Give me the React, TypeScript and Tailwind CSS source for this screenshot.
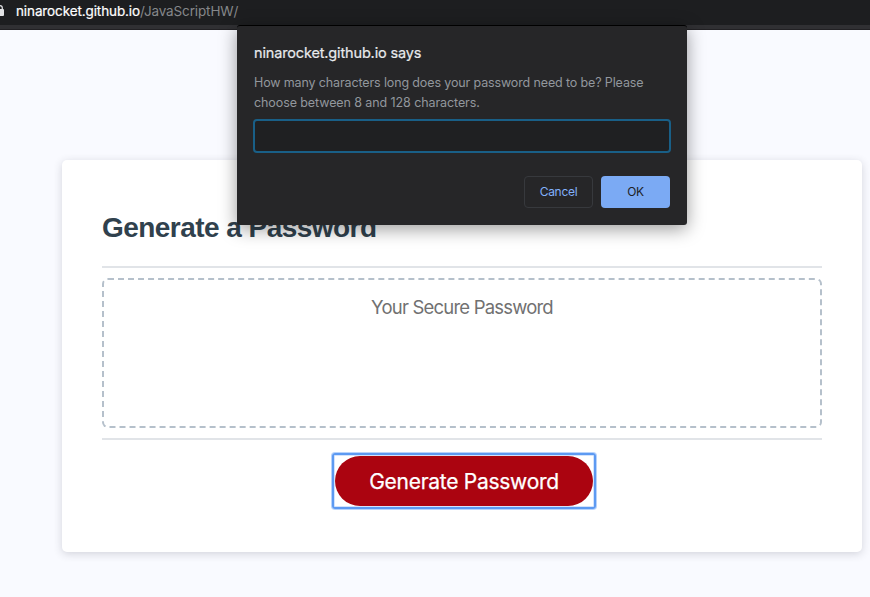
function AddressBar() {
  return (
    <header className="flex h-[30px] flex-col border-b border-[#222124] bg-[#1d1e20]">
      <div className="flex h-[25px] items-start whitespace-nowrap text-[13.5px] leading-[22px]">
        <svg className="mt-[4px] h-[13px] w-[6px] shrink-0" viewBox="0 0 6 13" fill="none">
          <path d="M0 1.7C1.7 1.7 2.3 2.8 2.3 4.3V6" stroke="#e2e3e5" strokeWidth="1.3" />
          <path d="M0 5H3Q4 5 4 6V11Q4 12 3 12H0Z" fill="#e2e3e5" />
        </svg>
        <span className="ml-[10px] w-[124px] tracking-[-0.11px] text-white [-webkit-text-stroke:0.2px_white]">
          ninarocket.github.io
        </span>
        <span className="tracking-[-0.13px] text-[#85878a]">/JavaScriptHW/</span>
      </div>
      <div className="h-[4px] bg-[#303033]" />
    </header>
  );
}

function PromptDialog() {
  return (
    <div
      role="dialog"
      className="absolute left-[237px] top-[25px] flex h-[200px] w-[450px] flex-col rounded-[3px] border-t border-black bg-[#262628] px-4 shadow-[0_4px_18px_rgba(0,0,0,0.4)]"
    >
      <h2 className="ml-[1px] mt-[17px] text-[14.5px] leading-5 tracking-[-0.15px] text-[#e8eaed] [-webkit-text-stroke:0.2px_#e8eaed]">
        ninarocket.github.io says
      </h2>
      <p className="ml-[1px] mt-[10px] whitespace-nowrap text-[12.5px] leading-5 text-[#92979d]">
        <span className="tracking-[-0.13px]">How many characters long does your password need to be? Please</span>
        <br />
        <span className="tracking-[-0.09px]">choose between 8 and 128 characters.</span>
      </p>
      <input
        aria-label="Password length"
        className="mt-[6px] h-[34px] w-full rounded-[4px] border-2 border-[#195f87] bg-[#1f2022] outline-none"
      />
      <div className="mr-[1px] mt-[23px] flex justify-end gap-2 text-[12px] tracking-[-0.3px]">
        <button className="h-8 w-[69px] rounded-[4px] border border-[#37393d] text-[#82b1fb]">Cancel</button>
        <button className="h-8 w-[69px] rounded-[4px] bg-[#7baaf4] text-[#202124]">OK</button>
      </div>
    </div>
  );
}

export default function App() {
  return (
    <div className="relative h-[597px] w-[870px] overflow-hidden bg-[#f9faff] font-['Inter',sans-serif]">
      <AddressBar />
      <main className="ml-[62px] mt-[130px] flex h-[392px] w-[800px] flex-col rounded-[5px] bg-white px-10 pt-[48px] shadow-[0_2px_9px_rgba(50,50,65,0.19)]">
        <h1 className="h-[58px] font-['Liberation_Sans',Arial,sans-serif] text-[28px] font-bold leading-10 tracking-[-0.54px] text-[#30414d]">
          Generate a Password
        </h1>
        <div className="h-[2px] bg-[#e1e4e8]" />
        <textarea
          readOnly
          placeholder="Your Secure Password"
          className="my-[10px] h-[150px] resize-none rounded-[6px] border-2 border-dashed border-[#b5c0cb] px-4 py-[13px] text-center text-[18.5px] leading-7 tracking-[-0.8px] outline-none placeholder:text-[#717171]"
        />
        <div className="h-[2px] bg-[#e1e4e8]" />
        <button className="ml-[230px] mt-[13px] flex h-[56px] w-[264px] items-center justify-center rounded-[3px] border-2 border-[#5d9af2] shadow-[0_0_0_1px_#b7d3fc,inset_0_0_0_1px_#d3e3fc]">
          <span className="flex h-[50px] w-[258px] items-center justify-center rounded-full bg-[#ab0410] pt-[2px] text-[21px] tracking-[-0.27px] text-white [-webkit-text-stroke:0.25px_white]">
            Generate Password
          </span>
        </button>
      </main>
      <PromptDialog />
    </div>
  );
}
